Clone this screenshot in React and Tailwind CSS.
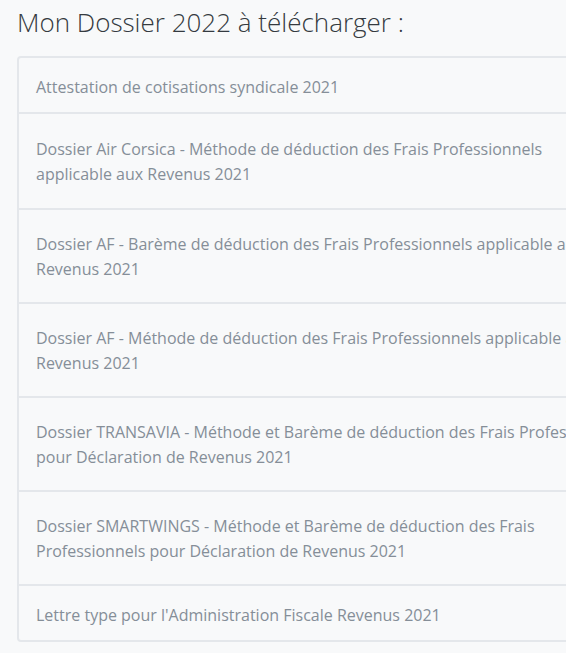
import React from "react";

const items = [
  { lines: ["Attestation de cotisations syndicale 2021"], single: true },
  { lines: ["Dossier Air Corsica - Méthode de déduction des Frais Professionnels", "applicable aux Revenus 2021"], extra: true },
  { lines: ["Dossier AF - Barème de déduction des Frais Professionnels applicable aux", "Revenus 2021"] },
  { lines: ["Dossier AF - Méthode de déduction des Frais Professionnels applicable aux", "Revenus 2021"] },
  { lines: ["Dossier TRANSAVIA - Méthode et Barème de déduction des Frais Professionnels", "pour Déclaration de Revenus 2021"] },
  { lines: ["Dossier SMARTWINGS - Méthode et Barème de déduction des Frais", "Professionnels pour Déclaration de Revenus 2021"] },
  { lines: ["Lettre type pour l'Administration Fiscale Revenus 2021"], single: true },
];

export default function App() {
  return (
    <div
      className="w-[566px] h-[653px] overflow-hidden bg-[#f8f9fa]"
      style={{ fontFamily: "'Open Sans', sans-serif" }}
    >
      <div className="pl-[17px] pt-[5px]">
        <h1 className="text-[26px] leading-[34px] font-light text-[#343a40] whitespace-nowrap">
          Mon Dossier 2022 à télécharger :
        </h1>
        <div className="mt-[17px] w-[680px] border-2 border-[#e4e7eb] rounded-[4px] bg-[#f8f9fa]">
          {items.map((it, i) => (
            <div
              key={i}
              className={
                (i < items.length - 1 ? "border-b-2 border-[#e4e7eb] " : "") +
                (it.single
                  ? "pt-[17px] pb-[12px] "
                  : it.extra
                  ? "pt-[23px] pb-[21px] "
                  : "pt-[22px] pb-[20px] ") +
                "pl-[17px] pr-[19px] text-[16px] leading-[25px] text-[#858e98]"
              }
            >
              {it.lines.map((l, j) => (
                <div key={j} className="whitespace-nowrap">
                  {l}
                </div>
              ))}
            </div>
          ))}
        </div>
      </div>
    </div>
  );
}
